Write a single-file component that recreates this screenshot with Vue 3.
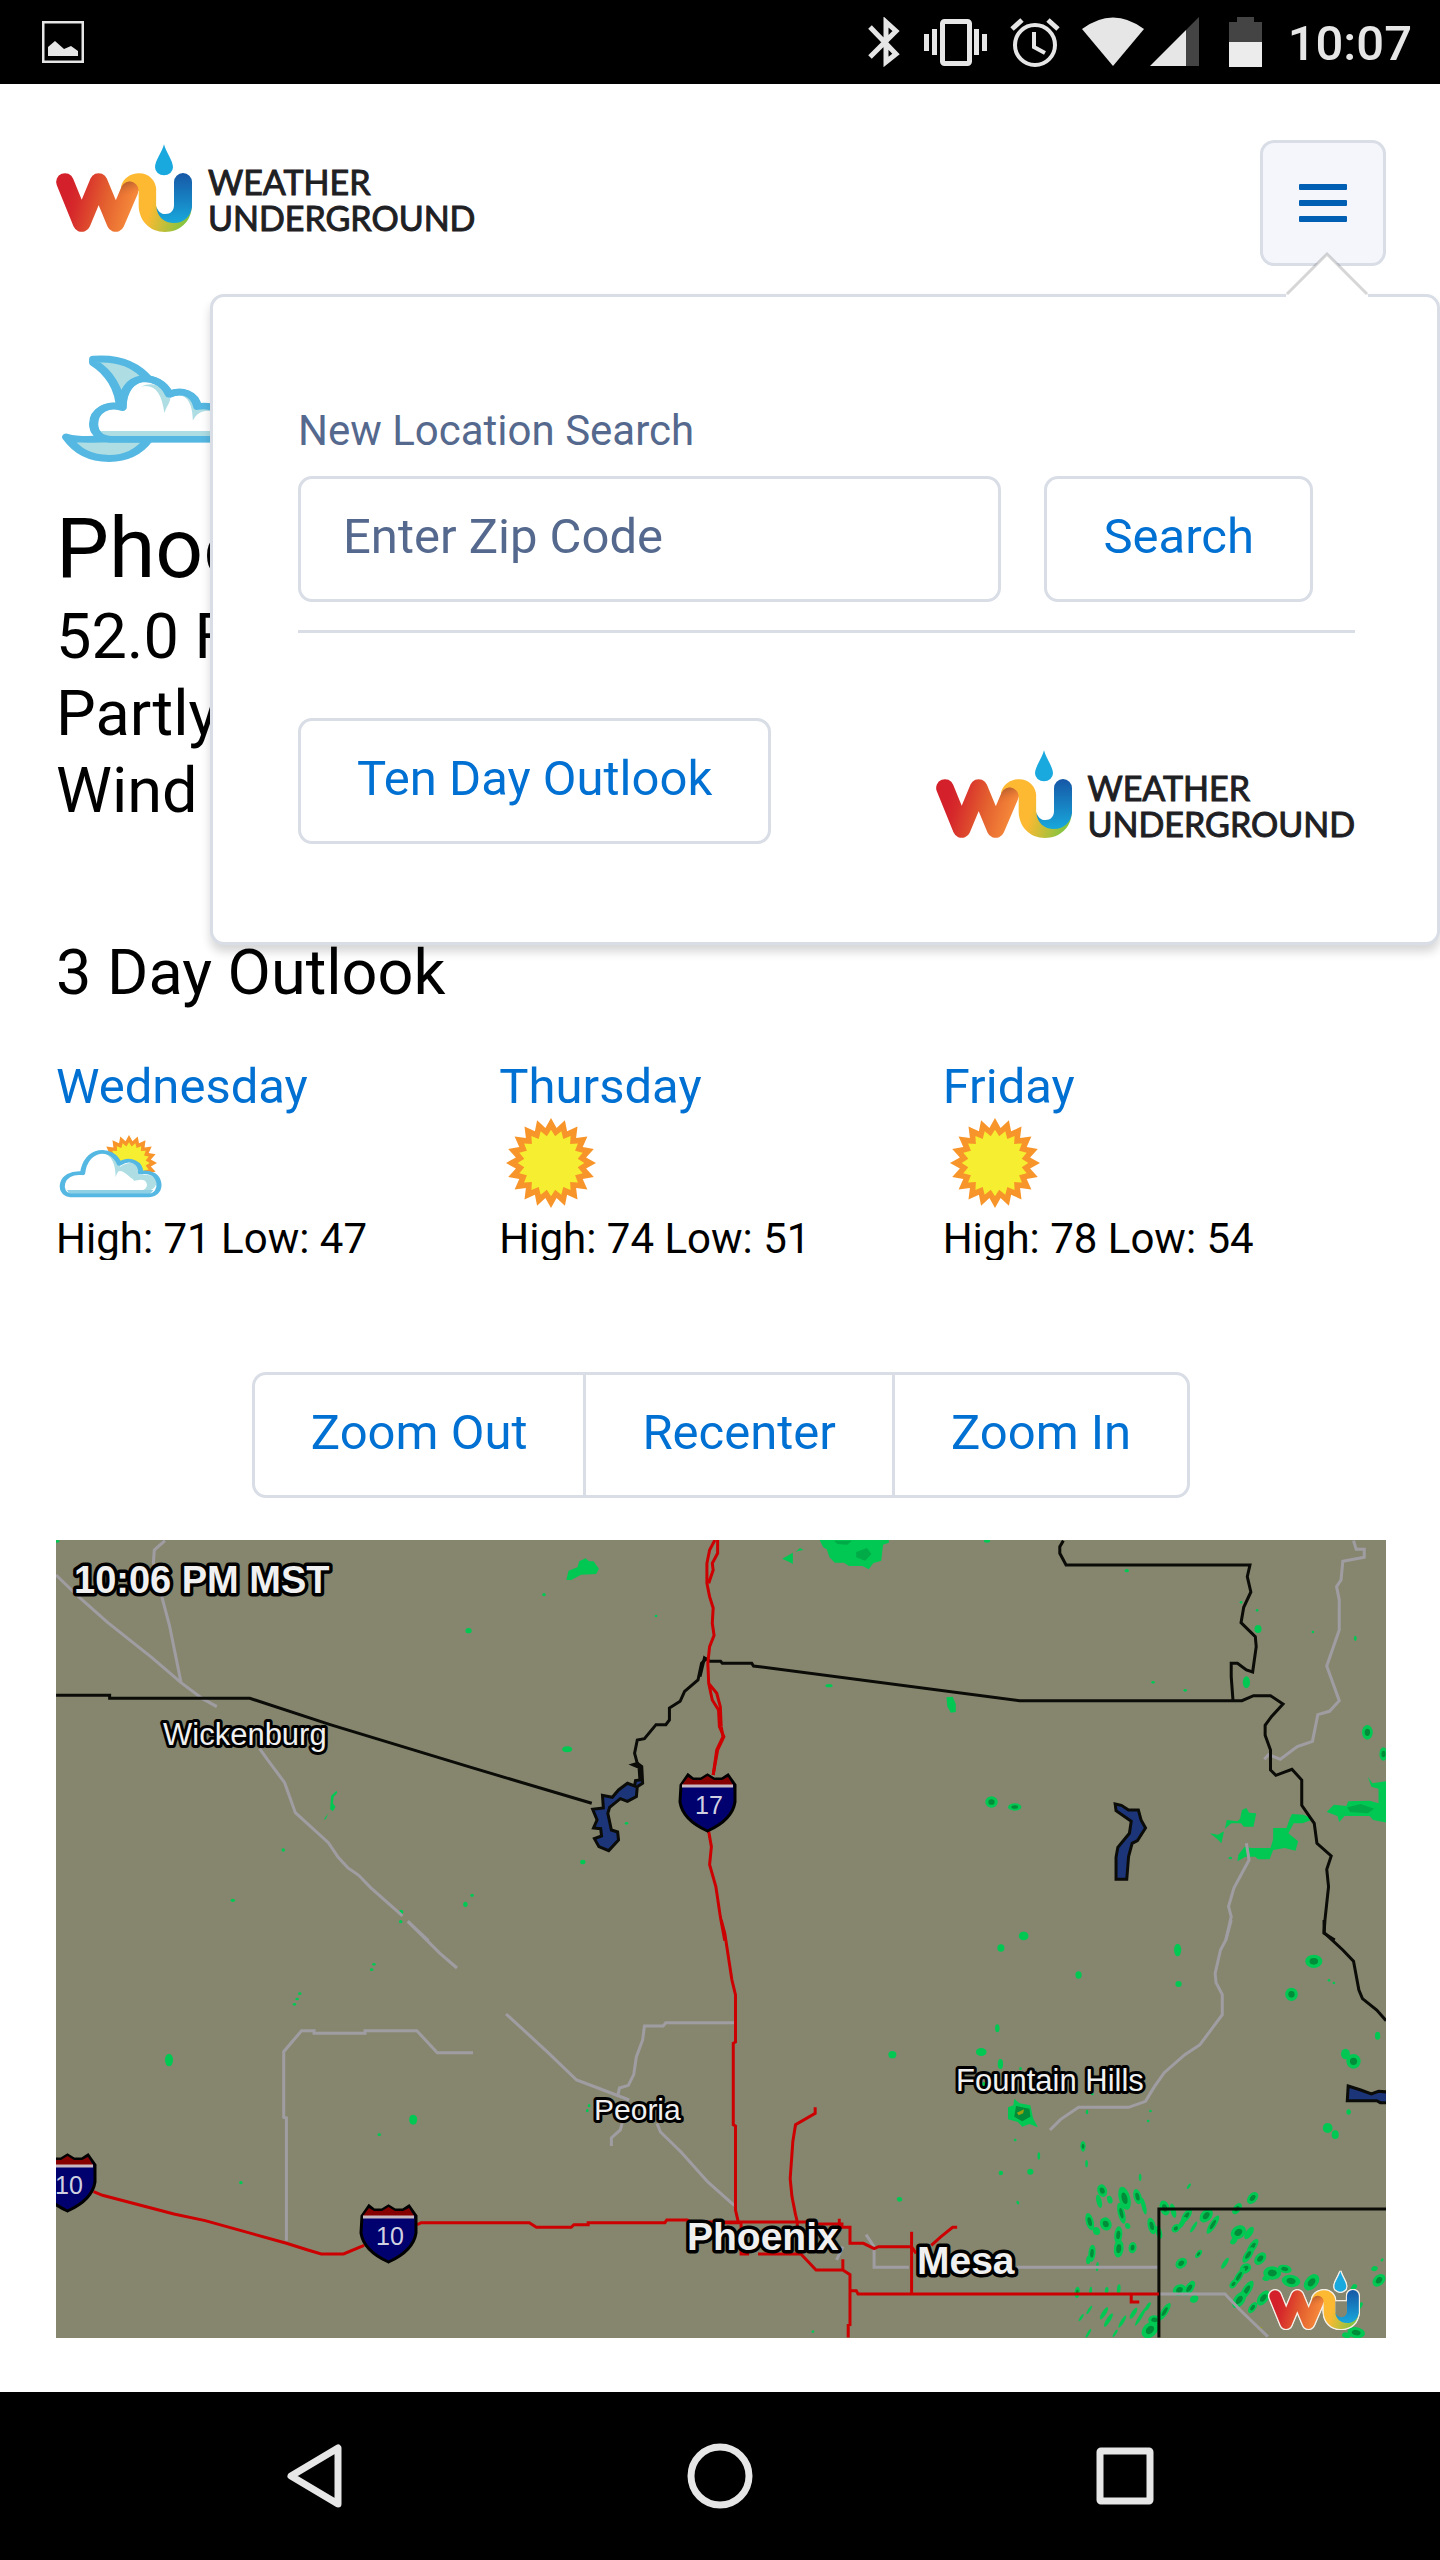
<script setup>
import { ref, h } from 'vue'

const zip = ref('')

const days = [
  { name: 'Wednesday', high: 71, low: 47, icon: 'partly' },
  { name: 'Thursday', high: 74, low: 51, icon: 'sun' },
  { name: 'Friday', high: 78, low: 54, icon: 'sun' },
]

function star(cx, cy, outer, inner, points, turn = 0) {
  const out = []
  for (let i = 0; i < points * 2; i++) {
    const r = i % 2 ? inner : outer
    const a = (Math.PI * i) / points - Math.PI / 2 + turn
    out.push(`${(cx + r * Math.cos(a)).toFixed(1)},${(cy + r * Math.sin(a)).toFixed(1)}`)
  }
  return out.join(' ')
}

/* Rain echoes, one list per map quadrant: x, y, radius x, radius y, intensity */
const echoesNW = [
  [1129, 224, 4, 5], [1380, 288, 3, 4], [960, 332, 7, 8], [1181, 688, 11, 9], [1314, 910, 4, 4],
  [545, 990, 4, 5], [432, 1141, 5, 5], [1216, 1026, 6, 7], [968, 1126, 4, 5], [953, 1153, 5, 8],
  [809, 1176, 5, 7], [808, 1205, 4, 5], [39, 64, 5, 4],
]
const echoesNE = [
  [643, 63, 7, 5], [956, 152, 5, 5], [1212, 247, 3, 4], [1248, 271, 3, 4], [1250, 327, 8, 12],
  [1373, 336, 3, 4], [1468, 355, 3, 8], [1015, 487, 4, 4], [1087, 511, 4, 4], [1224, 487, 8, 18],
  [289, 497, 8, 5], [1495, 637, 12, 22, 1], [1531, 702, 9, 20, 1], [653, 846, 14, 17, 1],
  [705, 861, 15, 11, 1], [1188, 1014, 4, 4], [725, 1247, 10, 12],
]
const echoesSW = [
  [748, 133, 4, 4], [743, 149, 4, 4], [582, 221, 4, 4], [576, 237, 4, 4], [570, 253, 4, 4],
  [289, 420, 9, 19], [836, 599, 9, 15], [760, 644, 4, 4], [450, 788, 4, 5], [1230, 557, 3, 5],
  [1226, 572, 3, 5],
]
const echoesSE = [
  [725, 48, 11, 13], [674, 84, 8, 11], [848, 165, 7, 11], [1070, 90, 8, 19], [1072, 192, 7, 9],
  [1375, 124, 19, 20, 1], [1325, 223, 14, 20, 1], [1409, 181, 3, 4], [1420, 189, 3, 4], [1518, 347, 6, 12],
  [1464, 424, 16, 22, 1], [1446, 402, 10, 16], [666, 325, 5, 12], [630, 396, 12, 12], [431, 404, 9, 11],
  [673, 432, 6, 15], [718, 446, 3, 5], [636, 502, 5, 16], [879, 522, 3, 4], [867, 576, 3, 7],
  [1009, 573, 3, 4], [1004, 603, 3, 4], [858, 679, 6, 16, 1], [759, 708, 3, 11], [866, 731, 3, 11],
  [706, 660, 3, 4], [674, 759, 5, 7], [740, 755, 7, 9], [986, 772, 3, 11], [712, 848, 3, 6],
  [447, 838, 6, 7], [253, 1235, 3, 4], [1453, 576, 5, 8], [1406, 624, 11, 15], [1423, 644, 8, 13],
  [901, 812, 11, 19, 1], [894, 844, 6, 20], [918, 839, 6, 12], [951, 835, 13, 35, 1], [944, 880, 8, 32, 1],
  [980, 830, 9, 23, 1], [994, 858, 5, 26], [873, 905, 9, 26, 1], [888, 933, 8, 12], [909, 912, 13, 20, 1],
  [937, 945, 9, 26, 1], [938, 986, 11, 27, 1], [969, 983, 9, 17, 1], [958, 918, 6, 9], [1012, 918, 9, 25, 1],
  [1028, 937, 7, 20, 1], [1041, 864, 11, 23, 1], [1060, 872, 6, 22], [1090, 887, 9, 22, 1], [1066, 925, 9, 13, 1],
  [1080, 909, 6, 20], [1106, 921, 4, 18], [1134, 887, 13, 22, 1], [1149, 914, 8, 30, 1], [1203, 866, 9, 18, 1],
  [1238, 834, 11, 19, 1], [1095, 799, 3, 9], [878, 1000, 8, 26, 1], [890, 1040, 3, 14], [870, 1020, 5, 13],
  [1117, 1002, 6, 13, 1], [1078, 1030, 12, 17, 1], [1206, 937, 16, 22, 1], [1230, 939, 8, 20], [1196, 962, 7, 12],
  [1238, 980, 9, 25, 1], [1228, 1005, 9, 25, 1], [1255, 1016, 12, 20, 1], [1222, 1045, 12, 16, 1],
  [1207, 1070, 8, 30, 1], [1176, 1030, 5, 18], [1195, 1092, 8, 14, 1], [1282, 1059, 20, 20, 1],
  [1310, 1047, 16, 12, 1], [1324, 1083, 21, 18, 1], [1370, 1087, 15, 26, 1], [1268, 1075, 8, 8],
  [1225, 1110, 10, 30, 1], [1208, 1140, 13, 26, 1], [1262, 1134, 12, 24, 1], [1238, 1163, 8, 18, 1],
  [1521, 1081, 13, 20, 1], [1511, 1046, 7, 8], [1528, 1020, 3, 5], [845, 1117, 6, 17, 1], [875, 1113, 3, 13],
  [911, 1111, 4, 10], [938, 1108, 4, 15], [1074, 1110, 14, 18, 1], [1096, 1105, 10, 24, 1], [1107, 1137, 9, 12],
  [854, 1193, 3, 12], [872, 1170, 3, 14], [905, 1180, 5, 20], [915, 1200, 5, 22], [946, 1205, 4, 20],
  [971, 1180, 5, 18], [987, 1190, 4, 30], [1003, 1160, 4, 14], [1018, 1200, 14, 14, 1], [1041, 1175, 8, 28, 1],
  [1008, 1230, 17, 26, 1], [870, 1240, 3, 14], [930, 1240, 3, 12], [1470, 1238, 20, 16, 1], [1448, 1246, 10, 8],
  [1478, 1158, 5, 12], [1465, 1102, 6, 10],
]

const quadrants = [
  { id: 'nw', transform: 'translate(-16 -20) scale(.4464 .3333)', echoes: echoesNW, tilt: 0 },
  { id: 'ne', transform: 'translate(644 -20) scale(.4464 .3333)', echoes: echoesNE, tilt: 0 },
  { id: 'sw', transform: 'translate(-16 380) scale(.4464 .3333)', echoes: echoesSW, tilt: 0 },
  { id: 'se', transform: 'translate(644 380) scale(.4464 .3333)', echoes: echoesSE, tilt: 24 },
]
const tiltFor = (q, e) => {
  if (!q.tilt || e[1] < 780) return 0
  return e[0] > 1060 || e[1] > 1140 ? q.tilt : e[1] < 940 ? -10 : 4
}

const shields = [
  { x: 623, y: 234, n: 17 },
  { x: 304, y: 665, n: 10 },
  { x: -17, y: 614, n: 10 },
]

const towns = [
  { name: 'Wickenburg', x: 107, y: 205, size: 31 },
  { name: 'Peoria', x: 538, y: 580, size: 30 },
  { name: 'Fountain Hills', x: 900, y: 551, size: 31 },
]
const cities = [
  { name: '10:06 PM MST', x: 18, y: 53, size: 38 },
  { name: 'Phoenix', x: 631, y: 710, size: 39 },
  { name: 'Mesa', x: 861, y: 734, size: 39 },
]

/* WU logo mark, shared by the header, the menu and the map corner */
const Mark = () =>
  h('svg', { viewBox: '51 42 408 264', 'aria-hidden': 'true', overflow: 'visible' }, [
    h('defs', [
      h('linearGradient', { id: 'wuWarm', gradientUnits: 'userSpaceOnUse', x1: 85, y1: 200, x2: 275, y2: 250 }, [
        h('stop', { offset: 0, 'stop-color': '#d4202a' }),
        h('stop', { offset: 0.15, 'stop-color': '#d62a2b' }),
        h('stop', { offset: 0.6, 'stop-color': '#e4622f' }),
        h('stop', { offset: 1, 'stop-color': '#f5883a' }),
      ]),
      h('linearGradient', { id: 'wuSun', gradientUnits: 'userSpaceOnUse', x1: 335, y1: 230, x2: 440, y2: 262 }, [
        h('stop', { offset: 0, 'stop-color': '#fdb932' }),
        h('stop', { offset: 1, 'stop-color': '#86c440' }),
      ]),
      h('linearGradient', { id: 'wuCool', x1: 0, y1: 0, x2: 0, y2: 1 }, [
        h('stop', { offset: 0, 'stop-color': '#1657a6' }),
        h('stop', { offset: 1, 'stop-color': '#18a8dc' }),
      ]),
      h('linearGradient', { id: 'wuShade', gradientUnits: 'userSpaceOnUse', x1: 262, y1: 154, x2: 276, y2: 196 }, [
        h('stop', { offset: 0, 'stop-color': '#a85a2c', 'stop-opacity': 0.85 }),
        h('stop', { offset: 1, 'stop-color': '#e8742f', 'stop-opacity': 0 }),
      ]),
    ]),
    h('path', {
      fill: 'url(#wuSun)',
      d: 'M246 170C252 146 274 130 300 130C330 130 352 152 352 182V230L458 232C456 276 422 306 378 306C332 306 299 272 299 225V182L262 200Z',
    }),
    h('path', {
      fill: 'none', stroke: 'url(#wuWarm)', 'stroke-width': 53, 'stroke-linecap': 'round', 'stroke-linejoin': 'round',
      d: 'M78 156L128 279L179 156L230 279L272 181',
    }),
    h('path', {
      fill: 'none', stroke: 'url(#wuShade)', 'stroke-width': 53, 'stroke-linecap': 'round',
      d: 'M264 200L272 181',
    }),
    h('path', { class: 'bowl', fill: '#fff', d: 'M352 180H405V254H352Z' }),
    h('path', {
      fill: 'url(#wuSun)',
      d: 'M325 228H352C354 245 364 256 378 256L405 262V290H340Z',
    }),
    h('path', {
      fill: 'url(#wuCool)',
      d: 'M405 156A27 27 0 0 1 459 156V232C454 262 434 279 405 279C376 279 354 260 352 230C358 245 366 252 379 252C395 252 405 242 405 225Z',
    }),
    h('path', { fill: '#1aa9de', d: 'M375 43C380 65 402 92 402 112A27 24 0 0 1 348 112C348 92 370 65 375 43Z' }),
  ])

const Sun = (props) => [
  h('polygon', { fill: '#f8952a', points: star(props.cx, props.cy, props.r, props.r * 0.79, 20) }),
  h('polygon', { fill: '#f5ee31', points: star(props.cx, props.cy, props.r * 0.74, props.r * 0.6, 20) }),
]
Sun.props = ['cx', 'cy', 'r']
</script>

<template>
  <div class="screen">
    <div class="status">
      <svg class="shot" width="42" height="42" viewBox="0 0 42 42">
        <rect x="1" y="1" width="40" height="40" fill="none" stroke="#e6e6e6" stroke-width="3" />
        <path d="M6 26L13 20L22 28L29 25L36 30V35H6Z" fill="#e6e6e6" />
      </svg>
      <svg class="bt" width="32" height="50" viewBox="0 0 32 50" fill="none" stroke="#e6e6e6" stroke-width="5">
        <path d="M2 10L28 37L18 45V5L28 14L2 40" />
      </svg>
      <svg class="vib" width="64" height="50" viewBox="0 0 64 50" fill="#e6e6e6">
        <rect x="18.500" y="4.500" width="27" height="42" rx="2" fill="none" stroke="#e6e6e6" stroke-width="5" />
        <path d="M0 17h5v17H0zM8 12h5v26H8zM50 12h5v26h-5zM58 17h5v17h-5z" />
      </svg>
      <svg class="alarm" width="50" height="50" viewBox="0 0 50 50" fill="none" stroke="#e6e6e6" stroke-width="4">
        <circle cx="25" cy="28" r="20" />
        <path d="M24 15V30L35 36" />
        <path d="M2 12L12 3M38 3L48 12" stroke-width="5" />
      </svg>
      <svg class="wifi" width="62" height="50" viewBox="0 0 62 50">
        <path d="M0 12Q31 -11 62 12L31 49Z" fill="#e6e6e6" />
      </svg>
      <svg class="cell" width="49" height="50" viewBox="0 0 49 50">
        <path d="M36 13L49 0V49H36Z" fill="#444" />
        <path d="M0 49L36 13V49Z" fill="#e6e6e6" />
      </svg>
      <svg class="batt" width="33" height="50" viewBox="0 0 33 50">
        <path d="M0 5H8V0H25V5H33V25H0Z" fill="#444" />
        <path d="M0 25H33V50H0Z" fill="#ececec" />
      </svg>
      <span class="clock">10:07</span>
    </div>

    <main class="page">
      <header class="top">
        <a href="#" class="logo">
          <Mark class="mark" />
          <span class="wordmark">WEATHER<br />UNDERGROUND</span>
        </a>
        <button class="btn menu" type="button" aria-label="Menu" aria-expanded="true">
          <i></i><i></i><i></i>
        </button>
      </header>

      <section class="now">
        <svg class="now-icon" width="180" height="112" viewBox="0 0 180 112" aria-hidden="true">
          <g transform="translate(-56 -34) scale(.4591 .3444)" stroke="#55b8e2" stroke-width="20" stroke-linejoin="round">
            <path d="M204 114C260 108 298 130 326 176L330 196L262 258C262 200 236 150 204 124Z" fill="#aedde3" />
            <path d="M145 340C168 382 196 402 238 402C276 402 304 382 324 346L220 346C196 346 170 350 145 340Z" fill="#aedde3" />
            <path d="M240 346C214 342 204 324 204 302C204 262 236 240 266 254C266 150 346 150 368 216C396 200 424 214 430 252C500 236 520 346 470 346Z" fill="#fff" />
            <g fill="#aedde3" stroke="none">
              <path d="M306 194C336 184 352 210 358 270C366 240 376 232 368 216C350 190 334 178 306 194Z" />
              <path d="M372 222C396 206 420 226 420 292C430 266 446 262 460 264V252H430C424 214 392 204 372 222Z" />
              <path d="M220 322H470V340H226Z" />
            </g>
            <path d="M240 346C214 342 204 324 204 302C204 262 236 240 266 254C266 150 346 150 368 216C396 200 424 214 430 252C500 236 520 346 470 346Z" fill="none" stroke-width="18" />
          </g>
        </svg>
        <h1>Phoenix</h1>
        <p>52.0 F</p>
        <p>Partly Cloudy</p>
        <p>Wind</p>
      </section>

      <section class="outlook">
        <h2>3 Day Outlook</h2>
        <ul class="days">
          <li v-for="d in days" :key="d.name">
            <a href="#">{{ d.name }}</a>
            <svg width="110" height="101" viewBox="0 0 110 101" aria-hidden="true">
              <Sun v-if="d.icon === 'sun'" :cx="52" :cy="46" :r="45" />
              <template v-else>
                <Sun :cx="73" :cy="46" :r="28" />
                <g transform="translate(-56 -217) scale(.4591 .3333)">
                  <path d="M152 886C126 882 128 812 180 820C186 744 244 736 260 792C284 770 308 790 306 818C354 806 358 886 324 886Z" fill="#fff" />
                  <path d="M222 758C246 764 252 800 252 832C258 800 266 812 290 838C292 850 300 834 316 842C326 858 316 870 306 872H326C350 860 346 816 304 826C306 788 284 780 262 800C250 766 238 760 222 758Z" fill="#aedde3" />
                  <path d="M146 870H334L326 884H152Z" fill="#8fd0e4" />
                  <path d="M152 886C126 882 128 812 180 820C186 744 244 736 260 792C284 770 308 790 306 818C354 806 358 886 324 886Z" fill="none" stroke="#55b8e2" stroke-width="11" stroke-linejoin="round" />
                </g>
              </template>
            </svg>
            <p>High: {{ d.high }} Low: {{ d.low }}</p>
          </li>
        </ul>
      </section>

      <div class="zoom" role="group" aria-label="Map zoom">
        <button class="btn" type="button">Zoom Out</button>
        <button class="btn" type="button">Recenter</button>
        <button class="btn" type="button">Zoom In</button>
      </div>

      <figure class="map">
        <svg class="radar" viewBox="0 0 1330 798" role="img" aria-label="Radar map of the Phoenix area">
          <rect width="1330" height="798" fill="#86866f" />

          <g class="echo">
            <g v-for="q in quadrants" :key="q.id" :transform="q.transform">
              <template v-for="(e, i) in q.echoes" :key="i">
                <ellipse :cx="e[0]" :cy="e[1]" :rx="e[2]" :ry="e[3]" :transform="`rotate(${tiltFor(q, e)} ${e[0]} ${e[1]})`" />
                <ellipse v-if="e[4]" class="heavy" :cx="e[0]" :cy="e[1]" :rx="e[2] / 2" :ry="e[3] / 2" :transform="`rotate(${tiltFor(q, e)} ${e[0]} ${e[1]})`" />
              </template>
            </g>
            <g :transform="quadrants[0].transform">
              <path d="M1179 180L1184 152L1204 142L1208 124L1222 115L1230 124H1240L1252 146L1246 162L1212 164L1190 180ZM664 812L666 818L658 830L656 850L662 860L656 874L650 868L652 828ZM646 880L640 898H636Z" />
            </g>
            <g :transform="quadrants[1].transform">
              <path d="M268 60H423V68L410 74L406 122L388 130L378 148L364 138H334L322 128H302L290 112L284 88L276 82ZM184 116L208 98V132L200 126ZM214 96L224 84L232 90L222 92ZM552 532L566 530L573 552V576L562 578L554 560Z" />
              <path d="M1180 900L1204 904L1210 896L1214 870L1224 864L1230 878L1246 880L1240 920H1218L1212 910H1190L1176 926ZM1142 940L1160 944L1174 934L1168 970L1158 956ZM1204 1024L1206 1004L1220 980L1236 984H1278L1284 958V924H1314L1320 900L1326 882L1352 884L1374 898L1350 910H1330L1318 940L1340 964L1334 992L1310 984L1284 990L1276 1018H1250L1244 1010H1222ZM1404 876L1420 854L1448 858L1452 844L1500 842L1520 850V806L1504 800L1496 770L1506 790L1537 784V908L1508 900L1500 888H1444L1432 906L1428 888Z" />
              <path class="medium" d="M1450 862L1480 852L1510 866L1496 880L1456 876ZM350 96L374 84L384 102L370 122L350 112ZM300 62H340L330 74L308 72Z" />
            </g>
            <g :transform="quadrants[3].transform">
              <path d="M704 536L716 550L740 556L746 594L757 622L738 612L722 620L712 606L690 598V562L702 556Z" />
              <path class="heavy" d="M708 558L738 566L740 590L722 604L704 590Z" />
              <path d="M710 578L726 568L724 580L714 586ZM1246 1220L1260 1222L1254 1232Z" fill="#9aa010" />
            </g>
          </g>

          <g class="road">
            <g :transform="quadrants[0].transform">
              <path d="M36 165L82 225L152 308L250 412L316 488L364 536L396 560M280 62L256 90L254 130L274 236L290 316L316 488M492 686L510 720L548 788L572 878L646 968L668 1012L690 1044L714 1066L740 1102L812 1188M824 1204L870 1262" />
            </g>
            <g :transform="quadrants[1].transform">
              <path d="M1464 62L1470 88H1488V112L1440 124L1436 180L1426 200L1432 240V330L1404 438L1432 542L1410 574L1384 584L1372 664L1338 680L1300 718L1274 704L1264 718M1224 970L1230 1020L1196 1104L1184 1160L1190 1190L1178 1260" />
            </g>
            <g :transform="quadrants[2].transform">
              <path d="M824 4L896 100L934 144M1044 282L1106 358L1140 400L1202 480L1250 504L1320 540M1555 308H1402L1396 318H1354L1350 360L1336 410L1330 464L1318 496L1298 504L1294 530M970 398H890L844 332H728V340H614V332H586L546 395V592L552 594V962M1304 610L1300 630L1280 654V678M1382 610L1390 636L1436 696L1496 786L1555 856" />
            </g>
            <g :transform="quadrants[3].transform">
              <path d="M1190 0L1178 60L1166 90L1154 160L1156 188L1170 224V284L1120 374L1086 404L1040 458L1018 500L998 544L960 562H848L808 598L784 630M372 944L390 980V1042H468M710 1042H1030M1030 1122H1176L1210 1170L1272 1250M320 980L306 1020" />
            </g>
          </g>

          <g class="line">
            <g :transform="quadrants[0].transform">
              <path d="M36 526H156V535H470L650 614L960 740L1236 850M1494 414L1482 430L1474 480L1444 514L1434 544L1410 564V600L1402 614H1380L1354 656L1338 660L1332 700L1338 730" />
              <path class="lake" d="M1338 730L1348 740L1350 790L1338 800L1336 830L1316 844L1300 836L1276 862L1272 880L1280 930L1294 936L1296 960L1274 992L1252 980L1242 956L1258 948L1256 926L1240 924L1248 900L1238 868L1262 864L1260 826L1282 832L1296 810L1316 790L1332 798L1334 782L1344 780L1342 742L1328 734Z" />
            </g>
            <g :transform="quadrants[1].transform">
              <path d="M0 470L10 414L22 424H46L50 430H116L120 438L716 542H1214L1240 527H1278L1306 552L1280 590L1266 616V646L1278 690V750L1290 766L1326 748L1348 780V856L1376 910L1382 970L1414 1008L1404 1048L1408 1100L1400 1200L1398 1240L1422 1260M814 62L806 80V100L820 135H1232L1226 170L1234 216L1218 262L1212 308L1244 350L1246 380L1238 456L1224 450L1204 430H1190V470L1194 542" />
              <path class="lake" d="M930 852L944 856L960 870H982L988 900L998 924L980 962L968 970L960 1010L956 1078H932V1012L936 982L962 940L966 904L932 872Z" />
            </g>
            <g :transform="quadrants[3].transform">
              <path d="M1398 0V38L1440 90L1464 124L1476 210L1484 236L1516 270L1537 302M1028 1253V867H1537" />
              <path class="lake" d="M1452 498L1480 510L1504 522L1520 514L1540 516V548H1524L1516 542H1450Z" />
            </g>
          </g>

          <g class="freeway">
            <g :transform="quadrants[0].transform">
              <path d="M1512 60L1500 90L1494 130V190L1500 230L1508 264L1506 310L1510 346L1500 380L1496 430L1498 490L1506 540L1520 570L1522 620L1532 650L1518 690L1508 765M1518 60V100L1506 130L1508 150L1498 190M1498 490L1516 520L1524 560L1526 620M1498 935L1504 980L1500 1034L1514 1100L1524 1190L1534 1262" />
              <path d="M1526 620L1530 650L1516 690L1508 765" />
            </g>
            <g :transform="quadrants[2].transform">
              <path d="M120 815L140 826L300 882L370 902L552 970L600 990L630 1002H680L726 976M845 914L854 908H1096L1112 922H1190L1196 914H1228V908H1400L1404 900H1450L1460 908H1568M1526 0L1534 40L1550 180L1558 225V366L1553 370V614L1558 618V870L1564 905" />
            </g>
            <g :transform="quadrants[3].transform">
              <path d="M10 906H244V912H318V922H336V970H366L390 986L400 980H474L484 1000M474 935V1122M312 896V930M92 905V1002H110M130 1002H226L260 1050H320V1018M320 1050L336 1064V1112H350L354 1122H1028M336 1112V1214L332 1216V1253M966 1124V1146H984M258 562V580L214 614L208 664L202 776L206 830L214 884L218 906V990M518 976L540 950L566 922H576" />
            </g>
          </g>

          <g v-for="(s, i) in shields" :key="'s' + i" :transform="`translate(${s.x} ${s.y})`">
            <path d="M2 11L9 1L14 5H22L28.500 1L35 5H43L49 1L56 11V28C54 41 44 50 28.500 57C13 50 3 41 1 28Z" fill="#00006e" stroke="#000" stroke-width="3" />
            <path d="M3 11L9 3L14 6H22L28.500 2L35 6H43L49 3L54 11Z" fill="#860000" />
            <path d="M3 12H54" stroke="#c8b8c0" stroke-width="3" />
            <text class="route" x="30" y="40" text-anchor="middle">{{ s.n }}</text>
          </g>

          <text v-for="t in towns" :key="t.name" class="town" :x="t.x" :y="t.y" :font-size="t.size">{{ t.name }}</text>
          <text v-for="t in cities" :key="t.name" class="city" :x="t.x" :y="t.y" :font-size="t.size">{{ t.name }}</text>
        </svg>
        <Mark class="map-mark" />
      </figure>

      <aside class="popover">
        <svg class="caret" width="84" height="46" viewBox="0 0 84 46" aria-hidden="true">
          <path d="M1 44L42 3L83 44V46H1Z" fill="#fff" />
          <path d="M2 43L42 3L82 43" fill="none" stroke="#000" stroke-opacity=".16" stroke-width="3" />
        </svg>
        <form class="search" @submit.prevent>
          <label for="zip">New Location Search</label>
          <div class="row">
            <input id="zip" v-model="zip" type="text" placeholder="Enter Zip Code" />
            <button class="btn" type="submit">Search</button>
          </div>
        </form>
        <div class="links">
          <button class="btn" type="button">Ten Day Outlook</button>
          <a href="#" class="logo">
            <Mark class="mark" />
            <span class="wordmark">WEATHER<br />UNDERGROUND</span>
          </a>
        </div>
      </aside>
    </main>

    <nav class="navbar">
      <button type="button" aria-label="Back">
        <svg width="66" height="66" viewBox="0 0 66 66"><path d="M56 5V61L9 33Z" /></svg>
      </button>
      <button type="button" aria-label="Home">
        <svg width="66" height="66" viewBox="0 0 66 66"><circle cx="33" cy="33" r="29" /></svg>
      </button>
      <button type="button" aria-label="Recent apps">
        <svg width="66" height="66" viewBox="0 0 66 66"><rect x="8" y="8" width="50" height="50" rx="1" /></svg>
      </button>
    </nav>
  </div>
</template>

<style>
body {
  margin: 0;
  background: #fff;
}
</style>

<style scoped>
.screen {
  display: flex;
  flex-direction: column;
  min-height: 100vh;
  font-family: Roboto, sans-serif;
  color: #000;
  background: #fff;
}
.screen * {
  box-sizing: border-box;
}
svg {
  display: block;
  flex: none;
}
h1, h2, p, ul, figure {
  margin: 0;
  padding: 0;
  font-weight: 400;
}
a {
  color: #0070d2;
  text-decoration: none;
}

.status {
  display: flex;
  align-items: center;
  height: 84px;
  padding: 0 28px 0 42px;
  background: #000;
}
.shot { margin-right: auto; }
.bt { margin-right: 24px; }
.vib { margin-right: 22px; }
.alarm { margin-right: 22px; }
.wifi { margin-right: 6px; }
.cell { margin-right: 30px; }
.batt { margin-right: 26px; }
.clock {
  padding-top: 4px;
  font-size: 49px;
  line-height: 60px;
  font-weight: 500;
  color: #e6e6e6;
}

.page {
  position: relative;
  flex: 1;
  padding: 56px 54px 54px 56px;
}
.top {
  display: flex;
  justify-content: space-between;
  align-items: flex-start;
}
.logo {
  display: flex;
  align-items: flex-end;
  gap: 16px;
  color: #1e2023;
}
.top .logo { margin-top: 4px; }
.mark {
  width: 136px;
  height: 88px;
}
.wordmark {
  margin-bottom: -4px;
  font-family: Lato, sans-serif;
  font-size: 34px;
  line-height: 36px;
  -webkit-text-stroke: 1px #1e2023;
}

.btn {
  height: 126px;
  padding: 0 56px 6px;
  border: 3px solid #d8dde6;
  border-radius: 14px;
  background: #fff;
  color: #0070d2;
  font: 400 49px Roboto, sans-serif;
  white-space: nowrap;
}
.menu {
  display: flex;
  flex-direction: column;
  align-items: center;
  justify-content: center;
  gap: 10px;
  width: 126px;
  padding: 0;
  background: #f4f6fb;
}
.menu i {
  width: 48px;
  height: 6px;
  border-radius: 1px;
  background: #005fb2;
}

.now-icon { margin: 88px 0 34px; }
h1 {
  font-size: 84px;
  line-height: 98px;
}
h2, .now p {
  font-size: 63px;
  line-height: 77px;
}
.outlook { margin-top: 105px; }
.days {
  display: grid;
  grid-template-columns: repeat(3, 1fr);
  margin-top: 46px;
  list-style: none;
}
.days a {
  display: block;
  font-size: 49px;
  line-height: 60px;
}
.days p {
  overflow: hidden;
  font-size: 42px;
  line-height: 42px;
}

.zoom {
  display: flex;
  justify-content: center;
  margin: 112px 0 42px;
}
.zoom .btn + .btn { margin-left: -3px; }
.zoom .btn:not(:first-child) {
  border-top-left-radius: 0;
  border-bottom-left-radius: 0;
}
.zoom .btn:not(:last-child) {
  border-top-right-radius: 0;
  border-bottom-right-radius: 0;
}

.map {
  position: relative;
  overflow: hidden;
}
.radar {
  width: 100%;
  height: auto;
}
.echo { fill: #00c853; }
.heavy { fill: #008c38; }
.medium { fill: #00ab48; }
.road path, .line path, .freeway path {
  fill: none;
  vector-effect: non-scaling-stroke;
}
.road { stroke: #a09da2; stroke-width: 3px; }
.line { stroke: #0b0b08; stroke-width: 3px; }
.freeway { stroke: #cc0000; stroke-width: 3px; }
.line .lake { fill: #1c3578; }
.route {
  font: 25px "Liberation Sans", sans-serif;
  fill: #d0d0e0;
}
.town, .city {
  font-family: "Liberation Sans", sans-serif;
  fill: #f0f0f0;
  stroke: #000;
  stroke-width: 6px;
  stroke-linejoin: round;
  paint-order: stroke;
}
.city { font-weight: 700; stroke-width: 7px; }
.map-mark {
  position: absolute;
  right: 27px;
  bottom: 9px;
  width: 90px;
  height: 58px;
  filter: drop-shadow(1px 0 0 #f4f0e8) drop-shadow(-1px 0 0 #f4f0e8) drop-shadow(0 1px 0 #f4f0e8) drop-shadow(0 -1px 0 #f4f0e8);
}
.map-mark :deep(.bowl) { fill: #86866f; }

.popover {
  position: absolute;
  top: 210px;
  left: 210px;
  right: 0;
  padding: 109px 82px 98px 85px;
  border: 3px solid #d8dde6;
  border-radius: 14px;
  background: #fff;
  box-shadow: 0 7px 10px rgba(0, 0, 0, .16);
}
.caret {
  position: absolute;
  top: -46px;
  right: 68px;
}
.search {
  padding-bottom: 28px;
  border-bottom: 3px solid #d8dde6;
}
.search label {
  display: block;
  margin-bottom: 21px;
  font-size: 42px;
  line-height: 49px;
  color: #54698d;
}
.row {
  display: flex;
  gap: 43px;
  padding-right: 42px;
}
.row input {
  flex: 1;
  min-width: 0;
  height: 126px;
  padding: 0 42px 6px;
  border: 3px solid #d8dde6;
  border-radius: 14px;
  background: #fff;
  font: 400 49px Roboto, sans-serif;
  color: #54698d;
}
.row input::placeholder {
  color: #54698d;
  opacity: 1;
}
.links {
  display: flex;
  justify-content: space-between;
  align-items: flex-end;
  margin-top: 85px;
}
.links .logo { margin-bottom: 6px; }

.navbar {
  display: flex;
  justify-content: center;
  gap: 339px;
  height: 168px;
  background: #000;
}
.navbar button {
  padding: 0;
  border: 0;
  background: none;
}
.navbar svg {
  fill: none;
  stroke: #e6e6e6;
  stroke-width: 7px;
  stroke-linejoin: round;
}
</style>
